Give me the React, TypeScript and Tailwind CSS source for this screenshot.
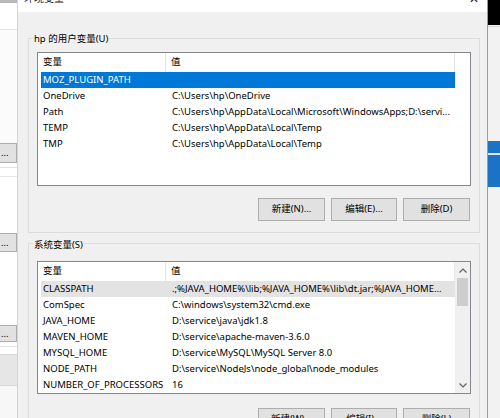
import React from 'react';

const userVars: [string, string][] = [
  ['MOZ_PLUGIN_PATH', ''],
  ['OneDrive', 'C:\\Users\\hp\\OneDrive'],
  ['Path', 'C:\\Users\\hp\\AppData\\Local\\Microsoft\\WindowsApps;D:\\servi...'],
  ['TEMP', 'C:\\Users\\hp\\AppData\\Local\\Temp'],
  ['TMP', 'C:\\Users\\hp\\AppData\\Local\\Temp'],
];

const sysVars: [string, string][] = [
  ['CLASSPATH', '.;%JAVA_HOME%\\lib;%JAVA_HOME%\\lib\\dt.jar;%JAVA_HOME...'],
  ['ComSpec', 'C:\\windows\\system32\\cmd.exe'],
  ['JAVA_HOME', 'D:\\service\\java\\jdk1.8'],
  ['MAVEN_HOME', 'D:\\service\\apache-maven-3.6.0'],
  ['MYSQL_HOME', 'D:\\service\\MySQL\\MySQL Server 8.0'],
  ['NODE_PATH', 'D:\\service\\NodeJs\\node_global\\node_modules'],
  ['NUMBER_OF_PROCESSORS', '16'],
];

function Header() {
  return (
    <div className="flex h-[19px] items-center ml-[3px] shrink-0">
      <div className="w-[125px] h-full flex items-center pl-[2px] border-r border-[#e5e5e5]">变量</div>
      <div className="w-[289px] h-full flex items-center pl-[5px] border-r border-[#e5e5e5]">值</div>
    </div>
  );
}

function Row({ name, value, state }: { name: string; value: string; state?: 'sel' | 'hot' }) {
  const bg = state === 'sel' ? 'bg-[#0078d7] text-white' : state === 'hot' ? 'bg-[#e3e3e3]' : '';
  return (
    <div className={`flex h-[16px] items-center ml-[3px] w-[414px] shrink-0 ${bg}`}>
      <div className="w-[125px] pl-[2px] whitespace-nowrap overflow-hidden">{name}</div>
      <div className="w-[289px] pl-[6px] whitespace-nowrap overflow-hidden">{value}</div>
    </div>
  );
}

function Btn({ label, w }: { label: string; w: string }) {
  return (
    <div className={`${w} h-[23px] border border-[#adadad] bg-[#e1e1e1] flex items-center justify-center`}>{label}</div>
  );
}

function Scrollbar() {
  return (
    <div className="w-[15px] bg-[#f0f0f0] flex flex-col items-center">
      <div className="h-[16px] w-full flex items-center justify-center">
        <svg width="8" height="5" viewBox="0 0 8 5"><path d="M0.5 4.5 L4 1 L7.5 4.5" fill="none" stroke="#606060" strokeWidth="1.2" /></svg>
      </div>
      <div className="w-[11px] h-[28px] bg-[#cdcdcd]" />
      <div className="flex-1" />
      <div className="h-[16px] w-full flex items-center justify-center">
        <svg width="8" height="5" viewBox="0 0 8 5"><path d="M0.5 0.5 L4 4 L7.5 0.5" fill="none" stroke="#606060" strokeWidth="1.2" /></svg>
      </div>
    </div>
  );
}

export default function App() {
  return (
    <div
      className="w-[500px] h-[418px] overflow-hidden flex bg-white text-[9.5px] text-black"
      style={{ fontFamily: '"Noto Sans", "Noto Sans CJK SC", sans-serif' }}
    >
      {/* window behind, left */}
      <div className="w-[18px] shrink-0 flex flex-col border-r border-[#d4d4d4] bg-white">
        <div className="h-[3px] bg-[#b8b8b8] shrink-0" />
        <div className="h-[27px] border-b border-[#e3e3e3] shrink-0" />
        <div className="h-[113px] bg-[#fbfbfb] shrink-0" />
        <div className="h-[20px] bg-[#e1e1e1] border-y border-r border-[#adadad] flex items-center leading-none pl-[1px] shrink-0">...</div>
        <div className="h-[5px] border-b border-[#e3e3e3] shrink-0" />
        <div className="h-[9px] border-b border-[#e8e8e8] shrink-0" />
        <div className="h-[56px] shrink-0" />
        <div className="h-[19px] bg-[#e1e1e1] border-y border-r border-[#adadad] flex items-center leading-none pl-[1px] shrink-0">...</div>
        <div className="h-[73px] shrink-0" />
        <div className="h-[17px] bg-[#e1e1e1] border-y border-r border-[#adadad] flex items-center leading-none pl-[1px] shrink-0">...</div>
        <div className="h-[5px] border-b border-[#e3e3e3] shrink-0" />
        <div className="h-[7px] shrink-0" />
        <div className="h-[32px] bg-[#e6e6e6] border-y border-[#d8d8d8] shrink-0" />
        <div className="flex-1 bg-[#f7f7f7]" />
      </div>

      {/* dialog */}
      <div className="w-[470px] shrink-0 flex flex-col border-r border-[#9a9a9a]">
        <div className="h-[12px] shrink-0 bg-white flex justify-between overflow-hidden px-[6px] text-[#222]">
          <span className="text-[10px] leading-[12px] -mt-[8px]">环境变量</span>
          <span className="text-[12px] leading-[12px] -mt-[7px] mr-[2px]">✕</span>
        </div>
        <div className="flex-1 min-h-0 overflow-hidden bg-[#f0f0f0] pl-[10px] pr-[7px] pt-[18px]">
          <fieldset className="border border-[#dcdcdc] px-[8px] pb-[11px]">
            <legend className="-ml-[4px] px-[1px] leading-[14px] pt-[2px]">hp 的用户变量(U)</legend>
            <div className="mt-[6px] h-[134px] border border-[#828790] bg-white flex flex-col">
              <Header />
              {userVars.map(([n, v], i) => (
                <Row key={n} name={n} value={v} state={i === 0 ? 'sel' : undefined} />
              ))}
            </div>
            <div className="mt-[12px] mr-[1px] flex justify-end gap-[6px]">
              <Btn label="新建(N)..." w="w-[67px]" />
              <Btn label="编辑(E)..." w="w-[66px]" />
              <Btn label="删除(D)" w="w-[67px]" />
            </div>
          </fieldset>

          <fieldset className="mt-[2px] border border-[#dcdcdc] px-[8px] pb-[11px]">
            <legend className="-ml-[4px] px-[1px] leading-[14px] pt-[3px]">系统变量(S)</legend>
            <div className="mt-[9px] h-[133px] border border-[#828790] bg-white flex">
              <div className="flex-1 flex flex-col">
                <Header />
                {sysVars.map(([n, v], i) => (
                  <Row key={n} name={n} value={v} state={i === 0 ? 'hot' : undefined} />
                ))}
              </div>
              <Scrollbar />
            </div>
            <div className="mt-[14px] mr-[1px] flex justify-end gap-[6px]">
              <Btn label="新建(W)..." w="w-[67px]" />
              <Btn label="编辑(I)..." w="w-[66px]" />
              <Btn label="删除(L)" w="w-[67px]" />
            </div>
          </fieldset>
        </div>
      </div>

      {/* window behind, right */}
      <div className="flex-1 flex flex-col bg-[#f2f2f2]">
        <div className="h-[25px] bg-black shrink-0" />
        <div className="h-[2px] border-b border-[#d8d8d8] shrink-0" />
        <div className="h-[114px] shrink-0" />
        <div className="h-[12px] bg-[#1a73c7] shrink-0" />
        <div className="h-[2px] bg-[#dfe8f2] shrink-0" />
        <div className="h-[32px] bg-[#1a73c7] shrink-0" />
        <div className="flex-1" />
      </div>
    </div>
  );
}
